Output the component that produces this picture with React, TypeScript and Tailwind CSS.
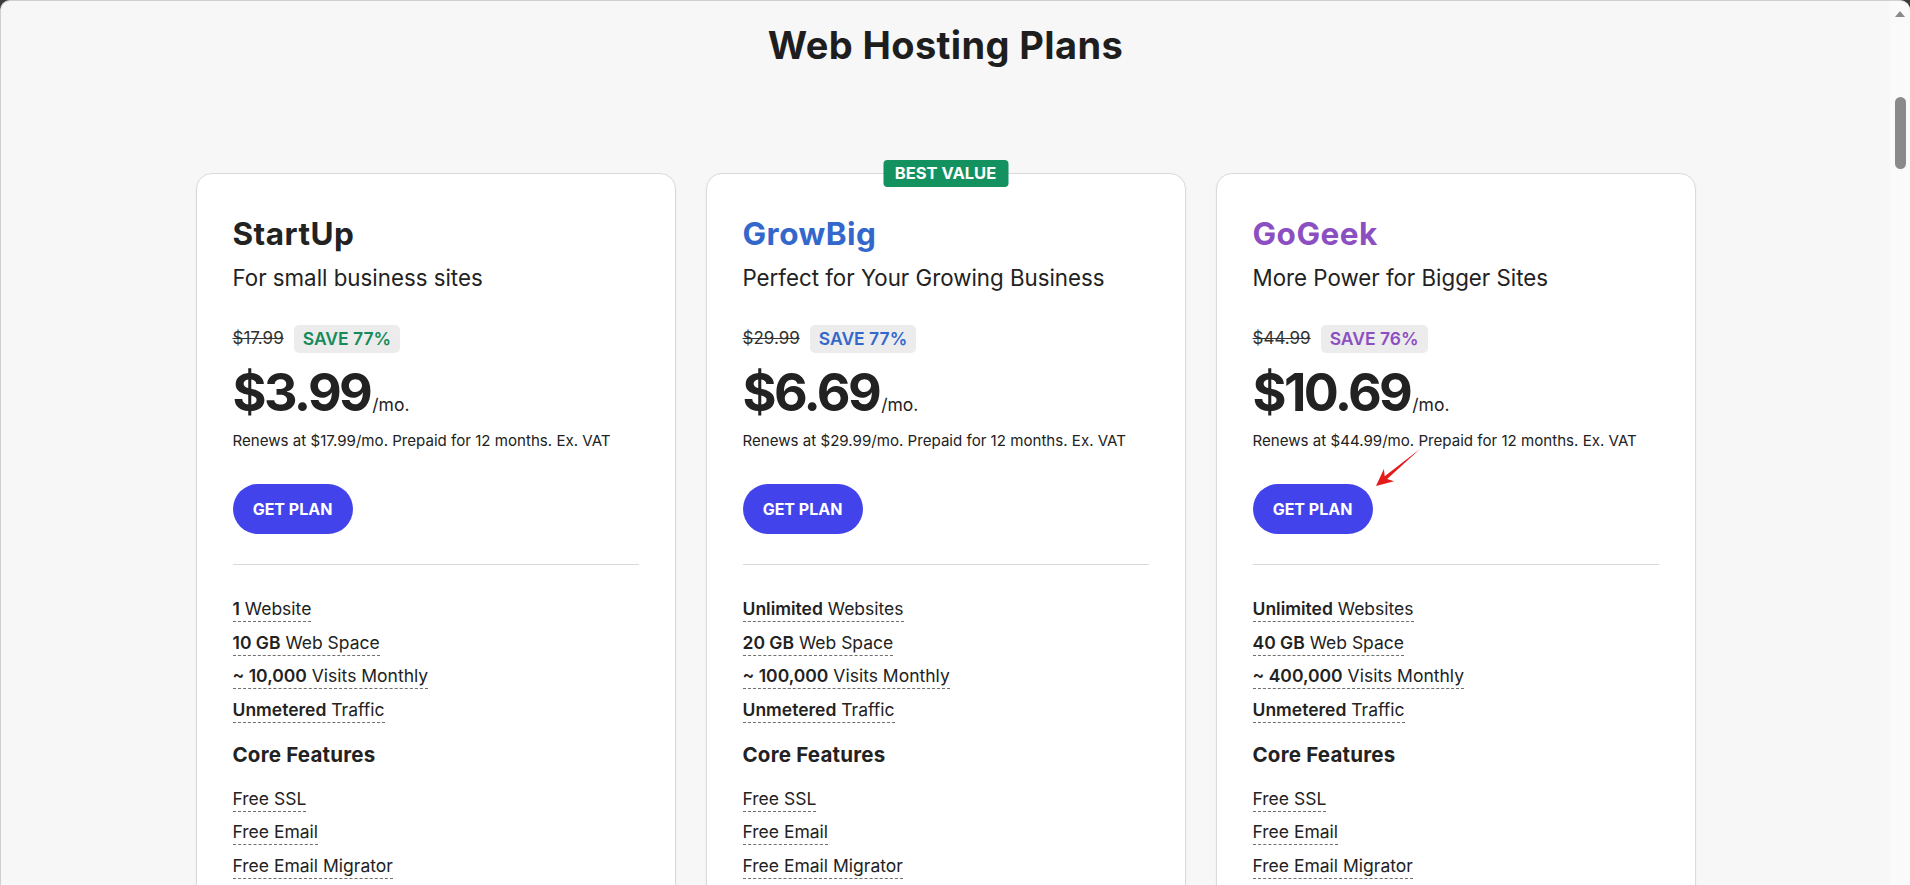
const plans = [
  {
    name: 'StartUp',
    nameColor: 'text-[#222222]',
    sub: 'For small business sites',
    old: '$17.99',
    save: 'SAVE 77%',
    saveColor: 'text-[#168a5b]',
    price: '$3.99',
    renew: '$17.99',
    best: false,
    arrow: false,
    features: [
      ['1', 'Website'],
      ['10 GB', 'Web Space'],
      ['~ 10,000', 'Visits Monthly'],
      ['Unmetered', 'Traffic'],
    ],
  },
  {
    name: 'GrowBig',
    nameColor: 'text-[#3467cc]',
    sub: 'Perfect for Your Growing Business',
    old: '$29.99',
    save: 'SAVE 77%',
    saveColor: 'text-[#3467cc]',
    price: '$6.69',
    renew: '$29.99',
    best: true,
    arrow: false,
    features: [
      ['Unlimited', 'Websites'],
      ['20 GB', 'Web Space'],
      ['~ 100,000', 'Visits Monthly'],
      ['Unmetered', 'Traffic'],
    ],
  },
  {
    name: 'GoGeek',
    nameColor: 'text-[#8c4fc2]',
    sub: 'More Power for Bigger Sites',
    old: '$44.99',
    save: 'SAVE 76%',
    saveColor: 'text-[#8c4fc2]',
    price: '$10.69',
    renew: '$44.99',
    best: false,
    arrow: true,
    features: [
      ['Unlimited', 'Websites'],
      ['40 GB', 'Web Space'],
      ['~ 400,000', 'Visits Monthly'],
      ['Unmetered', 'Traffic'],
    ],
  },
]

const core = ['Free SSL', 'Free Email', 'Free Email Migrator']

const Arrow = () => (
  <svg className="absolute left-[155px] top-[270px]" width="60" height="50" viewBox="0 0 60 50">
    <polygon
      points="48,5 15.1,35 22.1,37.2 4,42 11.9,25 12.7,32.2"
      fill="#e31b1b"
    />
  </svg>
)

const PlanCard = ({ plan }: { plan: (typeof plans)[number] }) => {
  return (
    <div className="relative bg-white border border-[#dadada] rounded-2xl px-9 pt-10 pb-10 shadow-[0_1px_3px_rgba(0,0,0,0.05)]">
      {plan.best && (
        <div className="absolute left-1/2 -translate-x-1/2 -top-[14px] w-[125px] h-[27px] rounded-[4px] bg-[#13915f] text-white text-[16.5px] font-bold flex items-center justify-center">
          BEST VALUE
        </div>
      )}
      {plan.arrow && <Arrow />}
      <div className={`text-[31.5px] leading-[40px] font-bold tracking-[0.015em] ${plan.nameColor}`}>
        {plan.name}
      </div>
      <div className="mt-[9px] text-[22.3px] leading-[30px] text-[#222]">{plan.sub}</div>
      <div className="mt-8 flex items-center gap-[10px]">
        <span className="text-[17px] text-[#333] line-through">{plan.old}</span>
        <span className={`h-7 px-[9px] rounded-[5px] bg-[#ececec] flex items-center text-[17.5px] font-semibold ${plan.saveColor}`}>
          {plan.save}
        </span>
      </div>
      <div className="mt-3 flex items-baseline text-[#222]">
        <span className="text-[52px] leading-[56px] font-bold tracking-[-0.05em]">{plan.price}</span>
        <span className="text-[17.5px] ml-[2px]">/mo.</span>
      </div>
      <div className="mt-[10px] text-[15.1px] leading-5 text-[#222]">
        Renews at {plan.renew}/mo. Prepaid for 12 months. Ex. VAT
      </div>
      <button className="mt-[33px] w-[120px] h-[50px] rounded-full bg-[#4343eb] text-white text-[16px] font-bold">
        GET PLAN
      </button>
      <div className="mt-[30px] border-t border-[#d9d9d9]" />
      <div className="mt-8 flex flex-col items-start gap-[8.5px]">
        {plan.features.map(([b, r]) => (
          <span key={r} className="text-[17.5px] leading-6 text-[#222] border-b border-dashed border-[#6f6f6f]">
            <span className="font-semibold">{b}</span> {r}
          </span>
        ))}
      </div>
      <div className="mt-[18px] text-[20.5px] leading-7 font-bold text-[#222] tracking-[0.01em]">Core Features</div>
      <div className="mt-[18px] flex flex-col items-start gap-[8.5px]">
        {core.map((c) => (
          <span key={c} className="text-[17.5px] leading-6 text-[#222] border-b border-dashed border-[#6f6f6f]">
            {c}
          </span>
        ))}
      </div>
    </div>
  )
}

export default function App() {
  return (
    <div className="h-[885px] w-full bg-[#3b3b3b] overflow-hidden" style={{ fontFamily: 'Inter, "Noto Sans", sans-serif' }}>
      <div className="h-full flex rounded-t-[10px] border-t border-l border-[#d0d0d0] bg-[#f7f7f7] overflow-hidden">
        <div className="flex-1 flex flex-col items-center pt-[21px]">
          <h1 className="text-[38px] leading-[46px] font-bold text-[#1e1e1e] tracking-[0.01em]">
            Web Hosting Plans
          </h1>
          <div className="mt-[105px] w-[1500px] grid grid-cols-3 gap-[30px]">
            {plans.map((p) => (
              <PlanCard key={p.name} plan={p} />
            ))}
          </div>
        </div>
        <div className="w-[20px] bg-[#fafafa] flex flex-col items-center pt-[10px]">
          <div className="w-0 h-0 border-l-[5px] border-r-[5px] border-b-[6px] border-l-transparent border-r-transparent border-b-[#8a8a8a]" />
          <div className="mt-[80px] w-[11px] h-[72px] rounded-full bg-[#8a8a8a]" />
        </div>
      </div>
    </div>
  )
}
